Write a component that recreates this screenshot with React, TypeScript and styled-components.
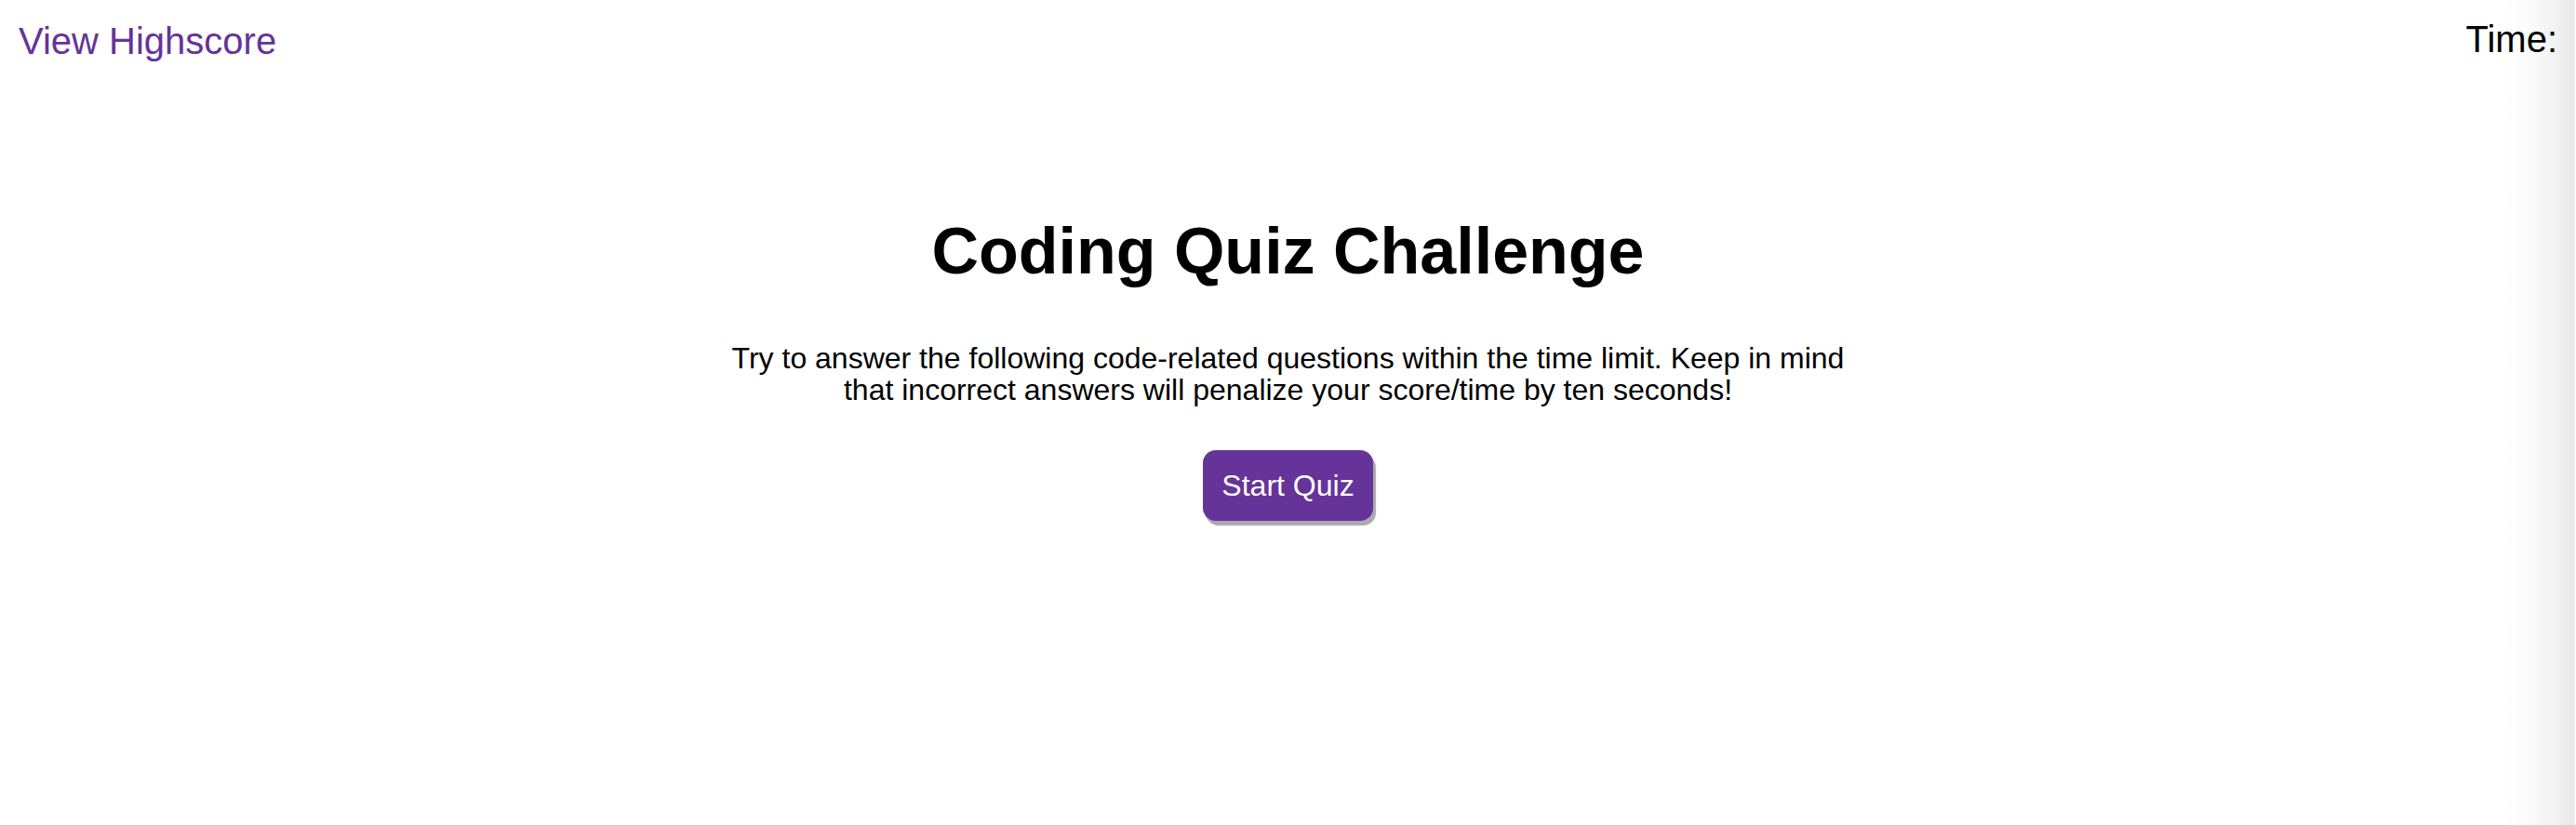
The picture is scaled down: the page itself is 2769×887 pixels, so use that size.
import React from "react";
import styled, { createGlobalStyle } from "styled-components";

const GlobalStyle = createGlobalStyle`
  html, body {
    margin: 0;
    padding: 0;
  }
  body {
    font-family: "Liberation Sans", Arial, Helvetica, sans-serif;
    color: #000;
    height: 100vh;
    overflow: hidden;
    background: linear-gradient(
      to right,
      #ffffff 0,
      #ffffff calc(100% - 80px),
      #fbfbfb calc(100% - 50px),
      #f1f1f1 calc(100% - 20px),
      #e7e7e7 calc(100% - 2px),
      #ffffff calc(100% - 1px)
    );
  }
`;

const Page = styled.div`
  display: flex;
  flex-direction: column;
`;

const Header = styled.header`
  display: flex;
  justify-content: space-between;
  align-items: flex-start;
  padding: 19px 20px 0 20px;
`;

const HighscoreLink = styled.a`
  font-size: 40px;
  line-height: 46px;
  color: #663399;
  text-decoration: none;
  margin-top: 2px;
  cursor: pointer;
`;

const Timer = styled.div`
  font-size: 40px;
  line-height: 46px;
  color: #000;
`;

const Main = styled.main`
  display: flex;
  flex-direction: column;
  align-items: center;
  padding-top: 163px;
`;

const Title = styled.h1`
  margin: 0;
  font-size: 70px;
  line-height: 80px;
  font-weight: 700;
  text-align: center;
`;

const Intro = styled.p`
  margin: 58px 0 0 0;
  max-width: 1220px;
  font-size: 32px;
  line-height: 34px;
  text-align: center;
`;

const StartButton = styled.button`
  margin-top: 48px;
  font-family: "Liberation Sans", Arial, Helvetica, sans-serif;
  font-size: 32px;
  line-height: 36px;
  color: #ffffff;
  background: #663399;
  border: none;
  border-radius: 14px;
  padding: 20px 20px;
  box-shadow: 3px 5px 1px #aaaaaa;
  cursor: pointer;
`;

export default function App() {
  return (
    <>
      <GlobalStyle />
      <Page>
        <Header>
          <HighscoreLink>View Highscore</HighscoreLink>
          <Timer>Time: </Timer>
        </Header>
        <Main>
          <Title>Coding Quiz Challenge</Title>
          <Intro>
            Try to answer the following code-related questions within the time
            limit. Keep in mind that incorrect answers will penalize your
            score/time by ten seconds!
          </Intro>
          <StartButton>Start Quiz</StartButton>
        </Main>
      </Page>
    </>
  );
}
